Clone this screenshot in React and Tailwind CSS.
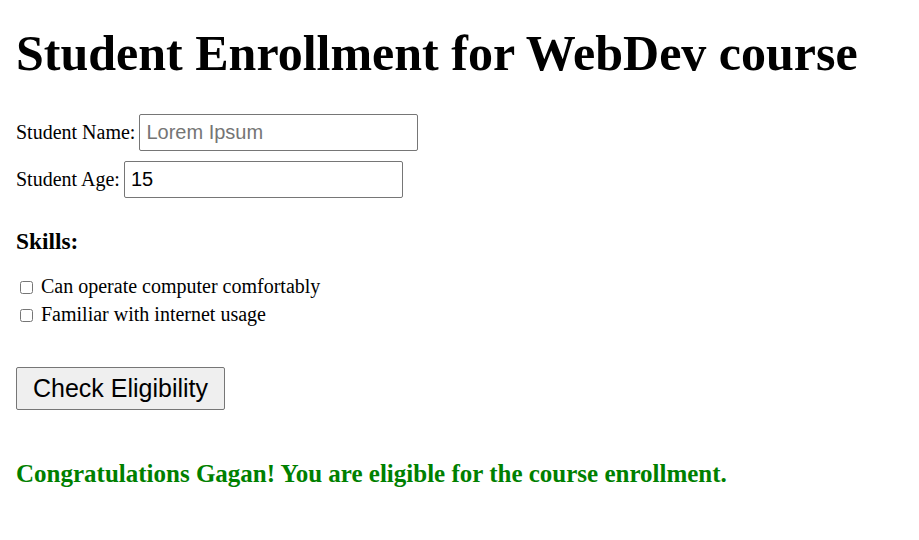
import React from 'react';

const App = () => {
  return (
    <div className="min-h-[540px] bg-white px-4 font-['Liberation_Serif','Times_New_Roman',serif] text-black">
      {/* Page title */}
      <h1 className="pt-[25px] text-[50px] font-bold leading-[56px]">
        Student Enrollment for WebDev course
      </h1>

      {/* Name / age fields */}
      <div className="mt-[33px] flex flex-col gap-[10px] text-[20px]">
        <div className="flex items-baseline gap-[4px]">
          <label htmlFor="name">Student Name:</label>
          <input
            id="name"
            type="text"
            placeholder="Lorem Ipsum"
            className="h-[37px] w-[279px] rounded-[2px] border border-[#767676] px-[6px] font-['Liberation_Sans',Arial,sans-serif] text-[20px] leading-[23px] placeholder:text-[#757575]"
          />
        </div>
        <div className="flex items-baseline gap-[4px]">
          <label htmlFor="age">Student Age:</label>
          <input
            id="age"
            type="text"
            defaultValue="15"
            className="h-[37px] w-[279px] rounded-[2px] border border-[#767676] px-[6px] font-['Liberation_Sans',Arial,sans-serif] text-[20px] leading-[23px]"
          />
        </div>
      </div>

      {/* Skills */}
      <h3 className="mt-[30px] text-[23.4px] font-bold leading-[27px]">Skills:</h3>
      <div className="mt-[17px] flex flex-col text-[20px] leading-[28px]">
        {['Can operate computer comfortably', 'Familiar with internet usage'].map((skill) => (
          <label key={skill} className="flex items-start">
            <input type="checkbox" className="ml-[4px] mr-[3px] mt-[9px] h-[13px] w-[13px]" />
            <span className="ml-[5px]">{skill}</span>
          </label>
        ))}
      </div>

      <button className="mt-[39px] rounded-[2px] border border-[#767676] bg-[#efefef] px-[16px] py-[6px] font-['Liberation_Sans',Arial,sans-serif] text-[25px] leading-[29px]">
        Check Eligibility
      </button>

      <p className="mt-[49px] text-[25px] font-bold leading-[29px] text-[#008000]">
        Congratulations Gagan! You are eligible for the course enrollment.
      </p>
    </div>
  );
};

export default App;
